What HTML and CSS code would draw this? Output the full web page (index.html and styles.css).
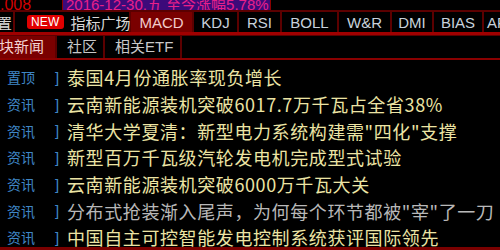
FILE: index.html
```html
<!DOCTYPE html>
<html>
<head>
<meta charset="utf-8">
<link rel="stylesheet" href="styles.css">
</head>
<body>
<div class="app">
  <div class="topbar">
    <div class="top-price"><span>.008</span></div>
    <div class="top-date"><span>2016-12-30,五 至今涨幅5.78%</span></div>
    <div class="top-rest"></div>
  </div>
  <div class="tabs1">
    <div class="tab cut"><span>设置</span></div>
    <div class="tab square"><span class="new">NEW</span><span>指标广场</span></div>
    <div class="tab active latin w-macd">MACD</div>
    <div class="tab latin w-kdj">KDJ</div>
    <div class="tab latin w-rsi">RSI</div>
    <div class="tab latin w-boll">BOLL</div>
    <div class="tab latin w-wr">W&amp;R</div>
    <div class="tab latin w-dmi">DMI</div>
    <div class="tab latin w-bias">BIAS</div>
    <div class="tab latin w-arbr">ARBR</div>
  </div>
  <div class="tabs2">
    <div class="tab2 active"><span>板块新闻</span></div>
    <div class="tab2">社区</div>
    <div class="tab2">相关ETF</div>
    <div class="tab2 fill"></div>
  </div>
  <ul class="news">
    <li><span class="tag">置顶</span><span class="br">]</span><span class="title">泰国4月份通胀率现负增长</span></li>
    <li><span class="tag">资讯</span><span class="br">]</span><span class="title">云南新能源装机突破6017.7万千瓦占全省38%</span></li>
    <li><span class="tag">资讯</span><span class="br">]</span><span class="title">清华大学夏清：新型电力系统构建需"四化"支撑</span></li>
    <li><span class="tag">资讯</span><span class="br">]</span><span class="title">新型百万千瓦级汽轮发电机完成型式试验</span></li>
    <li><span class="tag">资讯</span><span class="br">]</span><span class="title">云南新能源装机突破6000万千瓦大关</span></li>
    <li class="read"><span class="tag">资讯</span><span class="br">]</span><span class="title">分布式抢装渐入尾声，为何每个环节都被"宰"了一刀</span></li>
    <li><span class="tag">资讯</span><span class="br">]</span><span class="title">中国自主可控智能发电控制系统获评国际领先</span></li>
  </ul>
</div>
</body>
</html>
```
FILE: styles.css
```css
* { box-sizing: border-box; }
html, body { margin: 0; padding: 0; background: #000; }
body { width: 500px; height: 250px; overflow: hidden; font-family: "Noto Sans CJK SC", sans-serif; }
.app { display: flex; flex-direction: column; height: 250px; }

.topbar { display: flex; height: 11px; flex: none; overflow: hidden; border-bottom: 1px solid #5a0000; }
.topbar > div { display: flex; align-items: flex-end; overflow: hidden; flex: none; }
.top-price { width: 62px; color: #d00000; font-family: "Liberation Sans", sans-serif; font-size: 16px; }
.top-price span, .top-date span { line-height: 15px; display: block; margin-bottom: -2px; }
.top-date { width: 209px; background: #3c0a7a; border-left: 1px solid #8a0000; border-right: 1px solid #8a0000; color: #e8208a; font-size: 15px; padding-left: 3px; white-space: nowrap; font-family: "Liberation Sans", "Noto Sans CJK SC", sans-serif; }
.topbar > .top-rest { flex: 1; }

.tabs1 { display: flex; flex: none; height: 24px; background: #5c0000; padding-top: 1px; gap: 2px; border-bottom: 3px solid #a00000; overflow: hidden; }
.tab { flex: none; background: #000; color: #c8d2dc; font-size: 15px; display: flex; align-items: center; padding: 0 9px; white-space: nowrap; line-height: 19px; }
.tab.latin { font-family: "Liberation Sans", sans-serif; padding: 0; justify-content: center; }
.tab.cut { width: 13px; padding: 0 1px 0 0; justify-content: flex-end; overflow: hidden; color: #d8d8d8; }
.tab span { flex: none; }
.tab.square { padding: 0 5px 0 12px; width: 114px; color: #d8d8d8; }
.new { background: #e00000; color: #fff; font-family: "Liberation Sans", sans-serif; font-size: 12px; line-height: 14px; padding: 0 4px; border-radius: 3px; margin-right: 7px; letter-spacing: 0.2px; }
.tab.active { background: #7a0000; color: #f2cccc; }
.w-macd { width: 61px; }
.w-kdj { width: 43px; }
.w-rsi { width: 41px; }
.w-boll { width: 55px; }
.w-wr { width: 51px; }
.w-dmi { width: 40px; }
.w-bias { width: 48px; }
.w-arbr { width: 50px; }
.tab.w-arbr { justify-content: flex-start; padding-left: 3px; }

.tabs2 { display: flex; flex: none; height: 25px; background: #5c0000; gap: 2px; padding-top: 1px; border-bottom: 2px solid #8a0000; }
.tab2 { flex: none; background: #000; color: #c8c8c8; font-size: 15px; display: flex; align-items: center; padding: 0 10px; line-height: 20px; white-space: nowrap; font-family: "Liberation Sans", "Noto Sans CJK SC", sans-serif; }
.tab2 span { flex: none; }
.tab2.active { background: #7a0000; color: #f2d2d2; width: 55px; padding: 0 11px 0 0; justify-content: flex-end; overflow: hidden; }
.tab2:nth-child(2) { width: 46px; }
.tab2:nth-child(3) { width: 75px; }
.tab2.fill { flex: 1; }

.news { list-style: none; margin: 0; padding: 4px 0 0 0; flex: 1; border-bottom: 3px solid #7a0000; overflow: hidden; }
.news li { display: flex; align-items: center; height: 26.7px; white-space: nowrap; }
.tag { flex: none; color: #3f86c6; font-size: 14px; width: 55px; padding-left: 7px; }
.br { flex: none; color: #3f86c6; font-size: 15px; width: 12px; font-family: "Liberation Sans", sans-serif; }
.title { flex: none; color: #ece4a4; font-size: 18px; letter-spacing: 0.6px; font-family: "Noto Sans CJK SC", sans-serif; }
.read .title { color: #b8b8b8; }
```
